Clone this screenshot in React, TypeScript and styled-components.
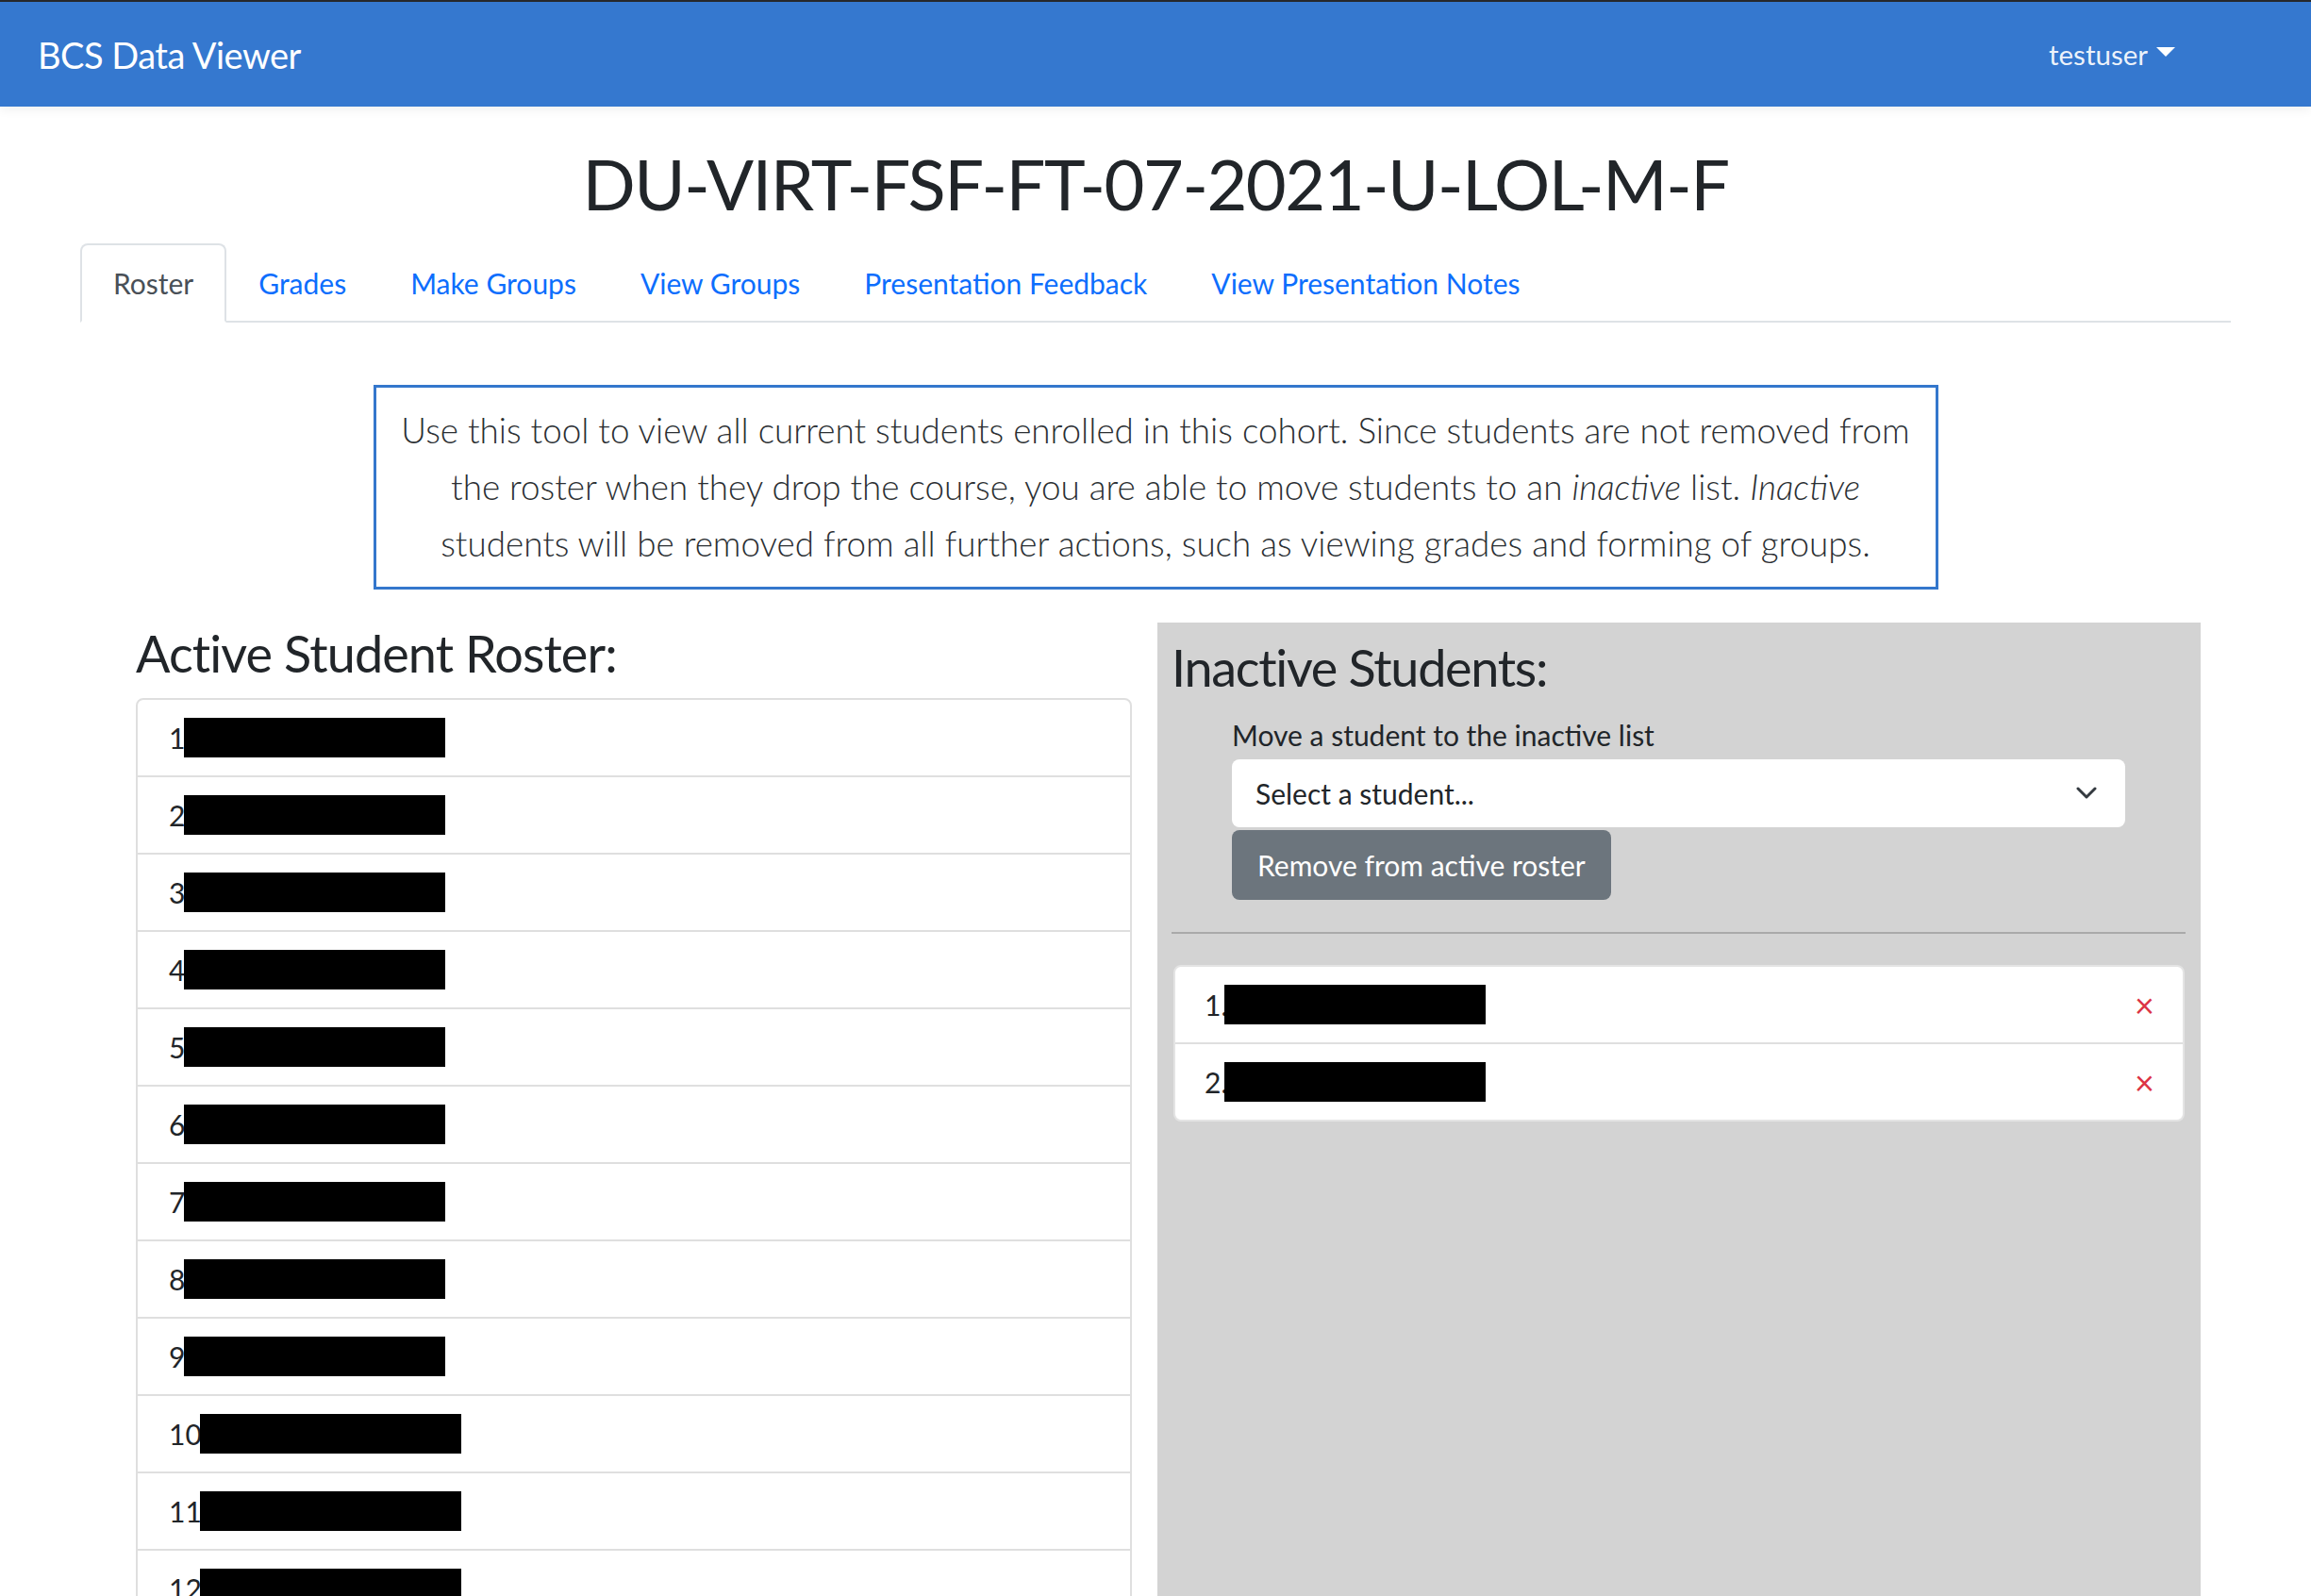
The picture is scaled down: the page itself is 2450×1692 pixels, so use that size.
import styled, { createGlobalStyle } from "styled-components";

const GlobalStyle = createGlobalStyle`
  * {
    box-sizing: border-box;
  }
  body {
    margin: 0;
    font-family: Lato, "Open Sans", sans-serif;
    color: #212529;
    background: #fff;
  }
`;

const activeCount = 14;
const inactiveCount = 2;

const tabs = [
  "Roster",
  "Grades",
  "Make Groups",
  "View Groups",
  "Presentation Feedback",
  "View Presentation Notes",
];

const App = () => {
  return (
    <>
      <GlobalStyle />
      <Page>
        <Navbar>
          <Brand>BCS Data Viewer</Brand>
          <UserMenu>
            testuser
            <Caret />
          </UserMenu>
        </Navbar>
        <Container>
          <Title>DU-VIRT-FSF-FT-07-2021-U-LOL-M-F</Title>
          <TabList>
            {tabs.map((t, i) => (
              <Tab key={t} $active={i === 0}>
                {t}
              </Tab>
            ))}
          </TabList>
          <InfoBox>
            Use this tool to view all current students enrolled in this cohort.
            Since students are not removed from
            <br />
            the roster when they drop the course, you are able to move students
            to an <em>inactive</em> list. <em>Inactive</em>
            <br />
            students will be removed from all further actions, such as viewing
            grades and forming of groups.
          </InfoBox>
          <Columns>
            <ActiveColumn>
              <Heading>Active Student Roster:</Heading>
              <List>
                {Array.from({ length: activeCount }, (_, i) => (
                  <Row key={i}>
                    <Num>{i + 1}.</Num>
                    <Redact />
                  </Row>
                ))}
              </List>
            </ActiveColumn>
            <InactivePanel>
              <Heading $inset>Inactive Students:</Heading>
              <Form>
                <Label>Move a student to the inactive list</Label>
                <Select>
                  <span>Select a student...</span>
                  <svg width="22" height="14" viewBox="0 0 22 14">
                    <path
                      d="M2 2l9 9 9-9"
                      fill="none"
                      stroke="#343a40"
                      strokeWidth="3"
                      strokeLinecap="round"
                      strokeLinejoin="round"
                    />
                  </svg>
                </Select>
                <RemoveButton>Remove from active roster</RemoveButton>
              </Form>
              <Divider />
              <List $narrow>
                {Array.from({ length: inactiveCount }, (_, i) => (
                  <Row key={i} $inactive>
                    <Num>{i + 1}.</Num>
                    <Redact $showDot />
                    <Close>×</Close>
                  </Row>
                ))}
              </List>
            </InactivePanel>
          </Columns>
        </Container>
      </Page>
    </>
  );
};
export default App;

const Page = styled.div`
  height: 1692px;
  overflow: hidden;
  display: flex;
  flex-direction: column;
`;

const Navbar = styled.nav`
  height: 113px;
  flex-shrink: 0;
  background-color: #3578cf;
  border-top: 2px solid #26282b;
  box-shadow: 0 4px 10px rgba(0, 0, 0, 0.06);
  display: flex;
  justify-content: space-between;
  align-items: center;
  padding: 0 144px 0 40px;
`;

const Brand = styled.div`
  color: #fff;
  font-size: 38px;
  letter-spacing: -0.5px;
`;

const UserMenu = styled.div`
  color: rgba(255, 255, 255, 0.92);
  font-size: 29.5px;
  display: flex;
  align-items: center;
  gap: 9px;
`;

const Caret = styled.span`
  width: 0;
  height: 0;
  border-left: 10px solid transparent;
  border-right: 10px solid transparent;
  border-top: 10px solid #fff;
  margin-top: -6px;
`;

const Container = styled.main`
  width: 2280px;
  margin: 0 auto;
  flex: 1;
  display: flex;
  flex-direction: column;
`;

const Title = styled.h1`
  margin: 37px 0 19px;
  text-align: center;
  font-size: 74px;
  font-weight: 400;
  letter-spacing: -1.5px;
  line-height: 89px;
  color: #212529;
`;

const TabList = styled.div`
  display: flex;
  border-bottom: 2px solid #dee2e6;
`;

const Tab = styled.div<{ $active?: boolean }>`
  padding: 16px ${(p) => (p.$active ? "33px" : "32px")};
  font-size: 30px;
  line-height: 48px;
  margin-bottom: -2px;
  border: 2px solid ${(p) => (p.$active ? "#dee2e6" : "transparent")};
  border-bottom-color: ${(p) => (p.$active ? "#fff" : "transparent")};
  border-radius: 8px 8px 0 0;
  background: ${(p) => (p.$active ? "#fff" : "transparent")};
  color: ${(p) => (p.$active ? "#495057" : "#0d6efd")};
`;

const InfoBox = styled.p`
  width: 1659px;
  margin: 66px auto 35px;
  padding: 15px 12px 16px;
  border: 3px solid #3477cc;
  text-align: center;
  font-size: 36.8px;
  font-weight: 300;
  line-height: 60px;
  white-space: nowrap;
  color: #2b2f33;
`;

const Columns = styled.div`
  flex: 1;
  display: flex;
  gap: 27px;
  padding: 0 32px 0 59px;
`;

const ActiveColumn = styled.section`
  width: 1056px;
  flex-shrink: 0;
`;

const InactivePanel = styled.section`
  flex: 1;
  background: #d3d3d3;
  padding: 15px 16px 0 15px;
`;

const Heading = styled.h2<{ $inset?: boolean }>`
  margin: 0 0 15px;
  font-size: 54px;
  font-weight: 400;
  letter-spacing: ${(p) => (p.$inset ? "-1.3px" : "-0.9px")};
  line-height: 65px;
  color: #212529;
`;

const Form = styled.div`
  padding: 0 64px;
`;

const Label = styled.div`
  font-size: 30px;
  line-height: 48px;
  margin-bottom: 2px;
`;

const Select = styled.div`
  height: 72px;
  background: #fff;
  border-radius: 8px;
  display: flex;
  align-items: center;
  justify-content: space-between;
  padding: 0 30px 0 25px;
  font-size: 30px;
`;

const RemoveButton = styled.button`
  margin-top: 3px;
  height: 74px;
  padding: 0 27px;
  border: none;
  border-radius: 8px;
  background: #6c757d;
  color: #fff;
  font-family: inherit;
  font-size: 30px;
`;

const Divider = styled.hr`
  margin: 34px 0 33px;
  border: none;
  border-top: 2px solid #a9a9a9;
`;

const List = styled.div<{ $narrow?: boolean }>`
  border: 2px solid ${(p) => (p.$narrow ? "#e4e4e4" : "#dfdfdf")};
  border-radius: 8px;
  background: #fff;
  overflow: hidden;
  margin: ${(p) => (p.$narrow ? "0 1px 0 2px" : "0")};
`;

const Row = styled.div<{ $inactive?: boolean }>`
  height: 82px;
  display: flex;
  align-items: center;
  padding: ${(p) => (p.$inactive ? "0 30px 0 31px" : "0 33px")};
  font-size: 30px;
  border-top: 2px solid #dfdfdf;
  &:first-child {
    border-top: none;
    height: 80px;
  }
`;

const Num = styled.span`
  color: #212529;
`;

const Redact = styled.span<{ $showDot?: boolean }>`
  width: 277px;
  height: 42px;
  background: #000;
  margin-left: ${(p) => (p.$showDot ? "-4px" : "-9px")};
`;

const Close = styled.span`
  margin-left: auto;
  color: #dc3545;
  font-size: 36px;
`;
